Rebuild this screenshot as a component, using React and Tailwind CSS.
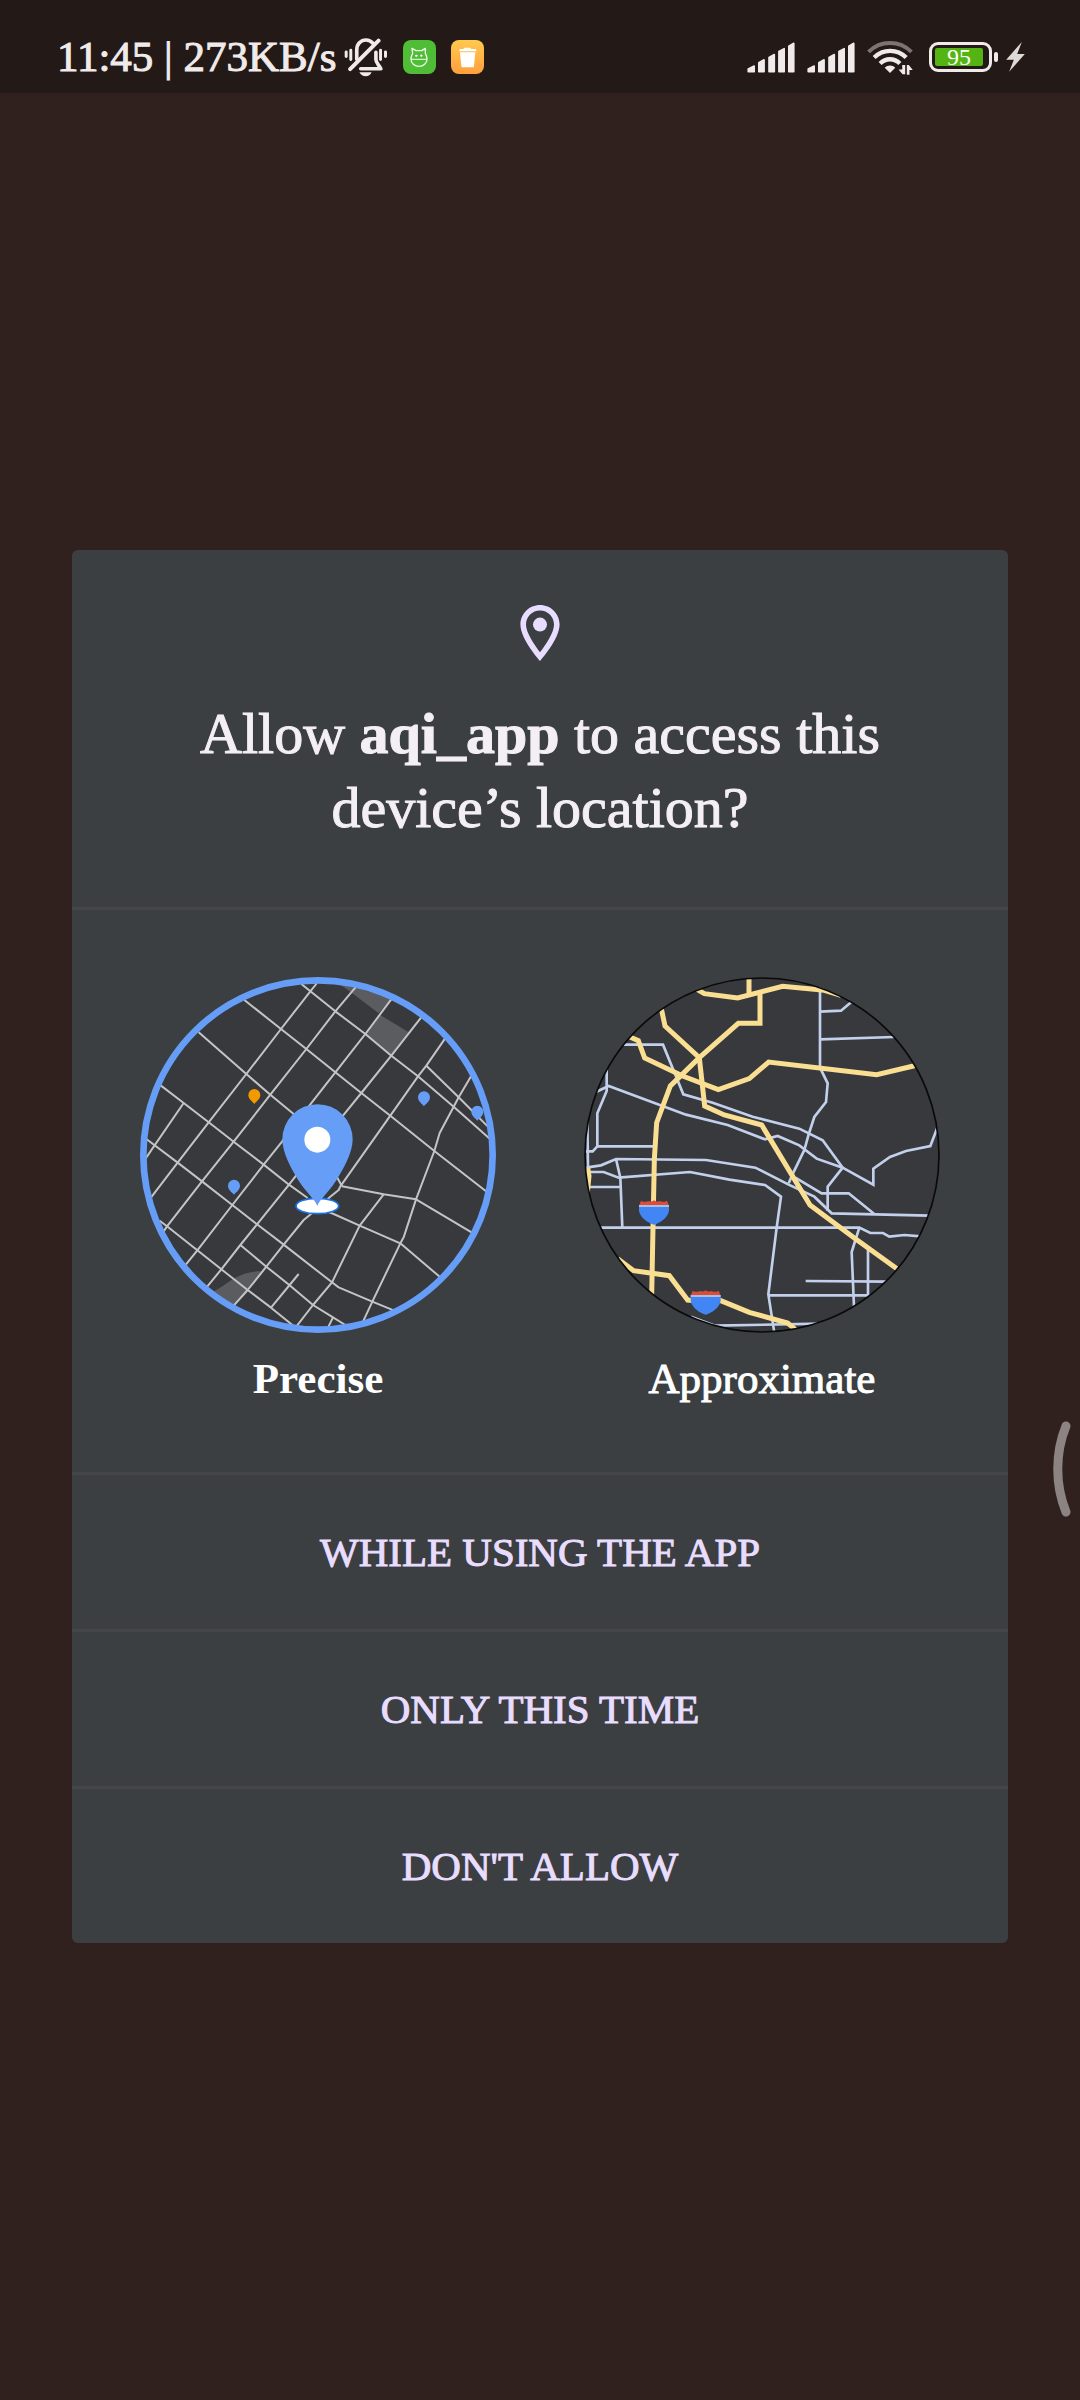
function BellOffIcon() {
  return (
    <svg viewBox="0 0 132 118" className="h-[39px] w-[44px]" fill="none" stroke="#f0ebea" strokeWidth="11" strokeLinecap="round" strokeLinejoin="round" aria-label="Silent mode">
      <path d="M6 42v14M20 37v28M110 37v28M125 42v14" strokeWidth="9" />
      <path d="M18 94L104 8" strokeWidth="12" />
      <path d="M38 64V36C38 19 50 6 66 6c9 0 16 4 21 10" />
      <path d="M96 43v22c0 10 8 15 15 28H50" />
      <path d="M46 104h37c-3 8-10 12-18 12s-15-4-19-12z" fill="#f0ebea" stroke="none" />
    </svg>
  );
}

function GreenAppIcon() {
  return (
    <svg viewBox="0 0 99 102" className="h-[34px] w-[33px]" fill="none" stroke="#eefbe9" strokeWidth="4" strokeLinejoin="round" aria-label="App notification">
      <rect width="99" height="102" rx="24" fill="#50bd36" stroke="none" />
      <path d="M27 25l2 15c-3 5-5 11-5 17 0 13 11 22 24 22s24-9 24-22c0-6-2-12-5-17V25L56 32H39z" />
      <path d="M24 58h48M55 43v8M51 47h8" strokeWidth="3" />
      <path d="M39 47h2" strokeWidth="6" strokeLinecap="round" />
    </svg>
  );
}

function TrashAppIcon() {
  return (
    <svg viewBox="0 0 99 102" className="h-[34px] w-[33px]" aria-label="Cleaner notification">
      <defs>
        <linearGradient id="cleaner" x1="0" y1="0" x2="0" y2="1">
          <stop offset="0" stopColor="#ffc94f" />
          <stop offset="1" stopColor="#ff9f3d" />
        </linearGradient>
      </defs>
      <rect width="99" height="102" rx="24" fill="url(#cleaner)" />
      <path d="M38 27c0-3 2-4 4-4h14c2 0 4 1 4 4h13c2 0 3 1 3 3v4H25v-4c0-2 1-3 3-3z" fill="#fff" />
      <path d="M27 37h46l-4 41c0 3-2 4-5 4H36c-3 0-5-1-5-4z" fill="#fff" />
    </svg>
  );
}

function SignalIcon() {
  return (
    <svg viewBox="0 0 144 94" className="h-[31px] w-[48px]" fill="#f0ebea" stroke="#f0ebea" strokeWidth="5" strokeLinejoin="round" aria-label="Signal">
      <path d="M3 90v-8l18-9v17zM35 90V63l16-9v36zM66 90V47l16-9v52zM96 90V29l16-9v70zM126 90V13l15-9v86z" />
    </svg>
  );
}

function WifiIcon() {
  return (
    <svg viewBox="0 0 138 106" className="h-[35px] w-[46px]" fill="none" strokeWidth="12" aria-label="Wi-Fi">
      <path d="M4 36C40 0 98 0 134 36" stroke="#7d7472" />
      <path d="M21 53c27-27 70-27 97 0" stroke="#f0ebea" strokeWidth="13" />
      <path d="M39 71c17-17 43-17 60 0" stroke="#f0ebea" strokeWidth="13" />
      <path d="M53 84c9-9 23-9 32 0L69 100z" fill="#f0ebea" />
      <path d="M109 103V80l-17 14h17M119 78v23M119 78l0 25M123 101V79l13 11h-13" stroke="#231917" strokeWidth="4" />
      <path d="M115 76v28h-8l-12-15h11V76zM120 105V76h6l12 15h-10v14z" fill="#f0ebea" />
    </svg>
  );
}

function BoltIcon() {
  return (
    <svg viewBox="0 0 56 90" className="h-[30px] w-[19px]" fill="#dfdada" aria-label="Charging">
      <path d="M47 0L0 53h23L9 89l47-53H33z" />
    </svg>
  );
}

function StatusBar() {
  return (
    <header className="flex h-[93px] items-center justify-between bg-[#231917] pt-[21px] pr-[55px] pl-[57px] text-[43px] text-[#f0ebea]">
      <div className="flex items-center">
        <span className="whitespace-nowrap [-webkit-text-stroke:1px_#f0ebea]">11:45 | 273KB/s</span>
        <div className="ml-2 flex items-center gap-[15px]">
          <BellOffIcon />
          <GreenAppIcon />
          <TrashAppIcon />
        </div>
      </div>
      <div className="flex items-center gap-3">
        <SignalIcon />
        <SignalIcon />
        <WifiIcon />
        <div className="ml-1 flex items-center gap-[2px]">
          <div className="flex h-[30px] w-[63px] rounded-[9px] border-3 border-[#f0ebea] p-[3px]">
            <div className="flex w-12 items-center justify-center rounded-[2px] bg-[#54b512] text-[24px] leading-none text-white">95</div>
          </div>
          <div className="h-[10px] w-1 rounded-full bg-[#f0ebea]" />
          <div className="ml-[6px]"><BoltIcon /></div>
        </div>
      </div>
    </header>
  );
}

function LocationIcon() {
  return (
    <svg viewBox="5 2 14 20" className="h-14 w-10" fill="#e9ddff" aria-hidden="true">
      <path d="M12 2C8.13 2 5 5.13 5 9c0 5.25 7 13 7 13s7-7.75 7-13c0-3.87-3.13-7-7-7zM7 9c0-2.76 2.24-5 5-5s5 2.24 5 5c0 2.88-2.88 7.19-5 9.88C9.92 16.21 7 11.85 7 9z" />
      <circle cx="12" cy="9" r="2.5" />
    </svg>
  );
}

const STREETS = [
  "543,75 645,157 735,225 813,290 893,352 1000,443 1110,541",
  "918,320 1015,415 1105,505",
  "372,123 482,210 558,270 645,340 723,402 810,470 942,576 1100,699",
  "235,220 378,345 450,407 520,465 650,655 665,682",
  "118,377 190,432 265,490 340,548 430,617 506,677 562,717",
  "78,540 172,611 245,667 336,738 410,796 490,857 635,970 655,985 756,1028 820,1054",
  "118,785 140,802 231,874 303,931 382,993 452,1046 520,1101",
  "360,858 438,923 506,977 578,1038 638,1075 680,1101",
  "590,745 640,765 718,800 840,853 960,955",
  "665,682 790,706 887,721 1060,824",
  "590,72 570,97 482,210 378,345 265,490 172,611 90,718",
  "708,82 645,157 558,270 450,407 340,548 245,667 140,802 128,820",
  "815,118 735,225 645,340 567,440 485,548 430,617 336,738 231,874 194,920",
  "905,172 813,290 723,402 668,470 523,655 506,677 410,796 360,858 303,931 258,986",
  "976,236 918,320 893,352 810,470 660,682 655,693 628,715 572,765 550,783 490,857 438,923 382,993 340,1040",
  "1053,350 1015,415 1000,443 958,522 942,576 887,721 850,835 840,853 756,1028 728,1088",
  "790,706 718,800 635,970 578,1038 526,1105",
  "535,945 452,1046",
  "190,432 76,598",
  "638,1075 622,1108",
];

function SmallPin({ x, y, color }) {
  return (
    <path
      transform={`translate(${x} ${y})`}
      d="M0 24C-4 18-18 10-18-3a18 18 0 0 1 36 0C18 10 4 18 0 24z"
      fill={color}
    />
  );
}

function PreciseMap() {
  return (
    <svg viewBox="59 54 1068 1068" className="size-[356px]" aria-hidden="true">
      <defs>
        <clipPath id="precise-clip"><circle cx="593" cy="588" r="524" /></clipPath>
      </defs>
      <circle cx="593" cy="588" r="524" fill="#37393d" />
      <g clipPath="url(#precise-clip)">
        <g fill="#5b5c5f">
          <path d="M650 70L815 118L775 163L690 98z" />
          <path d="M778 167L864 219L813 288L735 223z" />
          <path d="M275 1000C320 980 350 935 428 937L340 1040z" />
        </g>
        <g fill="none" stroke="#c3c4c5" strokeWidth="6" strokeLinejoin="round">
          {STREETS.map((points) => <polyline key={points} points={points} />)}
        </g>
        <SmallPin x={402} y={411} color="#f29900" />
        <SmallPin x={911} y={418} color="#669df6" />
        <SmallPin x={341} y={683} color="#669df6" />
        <SmallPin x={1071} y={461} color="#669df6" />
      </g>
      <circle cx="593" cy="588" r="524" fill="none" stroke="#669df6" strokeWidth="20" />
      <ellipse cx="591" cy="741" rx="64" ry="23" fill="#fff" stroke="#1a73e8" strokeWidth="5" />
      <path d="M591 741C584 722 560 704 534 664C510 625 486 580 486 541a105 105 0 0 1 211 0C697 580 672 625 648 664C622 704 598 722 591 741z" fill="#669df6" />
      <circle cx="591" cy="542" r="39" fill="#fff" />
    </svg>
  );
}

const ROADS = [
  "752,95 752,325 775,372 770,428 735,473 718,525 705,572 672,640 658,672",
  "752,157 815,154 846,128",
  "752,240 975,233",
  "160,256 281,256 342,405 430,430 550,472 690,508 760,543 820,625 775,682 775,755",
  "80,398 118,380 350,466 475,497 587,540 625,530 690,558 742,598 820,625 912,676 912,628 962,593 1010,575 1083,560 1106,500",
  "112,325 112,395 84,462 84,561 252,561",
  "84,561 70,576 45,576",
  "54,480 56,625",
  "50,625 95,618 140,599 410,602 558,625 658,676 735,712 787,762 1080,769",
  "678,655 757,702 838,702 914,763",
  "55,638 103,638 148,655 362,638 480,661 587,677 635,712 622,805 597,1005 615,1120",
  "140,599 153,655 159,805",
  "58,683 153,683",
  "90,805 870,805 903,821 941,821 960,832 1005,827 1055,831",
  "870,805 847,878 854,1042",
  "896,870 896,1008",
  "597,1008 900,1008",
  "709,965 955,967",
  "365,1072 437,1099 755,1093",
];

const HIGHWAYS = [
  "383,90 405,103 505,116 640,81 765,93 815,108",
  "539,50 539,105",
  "572,100 572,192 507,192 390,295 303,380 262,490 255,600 251,805 247,1010",
  "276,148 287,200 390,295 406,440 465,467 577,497 722,737 860,840 985,930",
  "180,232 207,244 226,296 340,350 447,391 540,358 598,308 922,346 1045,317",
  "145,898 193,934 300,949 355,1022 380,1024",
  "445,1020 540,1059 655,1091 678,1110",
  "55,625 59,650 54,700",
];

function Shield({ x, y }) {
  return (
    <g transform={`translate(${x} ${y})`}>
      <path d="M-39 0C-30 5-22 4-16 1Q-8 5 0-1Q8 5 16 1C22 4 30 5 39 0L45 15H-45z" fill="#dd4b39" />
      <path d="M-45 13H45V30C41 52 18 66 0 72C-18 66-41 52-45 30z" fill="#4285f4" />
      <path d="M-45 16H45" stroke="#cdd3dc" strokeWidth="5" />
    </g>
  );
}

function ApproximateMap() {
  return (
    <svg viewBox="44 53 1068 1068" className="size-[356px]" aria-hidden="true">
      <defs>
        <clipPath id="approximate-clip"><circle cx="578" cy="587" r="532" /></clipPath>
      </defs>
      <circle cx="578" cy="587" r="532" fill="#37393d" />
      <g clipPath="url(#approximate-clip)" fill="none">
        <g stroke="#c3d0eb" strokeWidth="8">
          {ROADS.map((points) => <polyline key={points} points={points} />)}
        </g>
        <g stroke="#fade92" strokeWidth="15">
          {HIGHWAYS.map((points) => <polyline key={points} points={points} />)}
        </g>
        <Shield x={254} y={724} />
        <Shield x={409} y={994} />
      </g>
      <circle cx="578" cy="587" r="531" fill="none" stroke="#090a0a" strokeWidth="5" />
    </svg>
  );
}

const ACTIONS = ["WHILE USING THE APP", "ONLY THIS TIME", "DON'T ALLOW"];

export default function App() {
  return (
    <div className="relative flex min-h-screen flex-col bg-[#30211e] font-['Liberation_Serif',serif]">
      <StatusBar />
      <main className="flex flex-1 flex-col justify-center px-[72px]">
        <section role="dialog" aria-labelledby="prompt" className="overflow-hidden rounded-[6px] bg-[#3c3f42]">
          <div className="flex flex-col items-center px-20 pt-[55px] pb-[62px]">
            <LocationIcon />
            <h1 id="prompt" className="mt-9 text-center text-[58px] leading-[74px] text-[#f4eff4] [-webkit-text-stroke:1px_#f4eff4]">
              Allow <strong className="font-bold">aqi_app</strong> to access this<br />device’s location?
            </h1>
          </div>
          <div className="grid grid-cols-2 border-t-3 border-[#454649] px-6 pt-[67px] pb-[65px] text-[43px] leading-[56px] text-white">
            <button type="button" aria-pressed="true" className="flex flex-col items-center gap-[18px] font-bold">
              <PreciseMap />
              <span>Precise</span>
            </button>
            <button type="button" aria-pressed="false" className="flex flex-col items-center gap-[18px] [-webkit-text-stroke:1px_#fff]">
              <ApproximateMap />
              <span>Approximate</span>
            </button>
          </div>
          {ACTIONS.map((label) => (
            <button key={label} type="button" className="flex h-[157px] w-full items-center justify-center border-t-3 border-[#454649] text-[41px] leading-[48px] text-[#e9ddff] [-webkit-text-stroke:1px_#e9ddff]">
              {label}
            </button>
          ))}
        </section>
      </main>
      <svg viewBox="0 0 18 96" className="absolute top-[1421px] right-[9px] h-24 w-[18px]" fill="none" stroke="#8c8482" strokeWidth="9" strokeLinecap="round" aria-hidden="true">
        <path d="M13 5C2 32 2 64 13 91" />
      </svg>
    </div>
  );
}
